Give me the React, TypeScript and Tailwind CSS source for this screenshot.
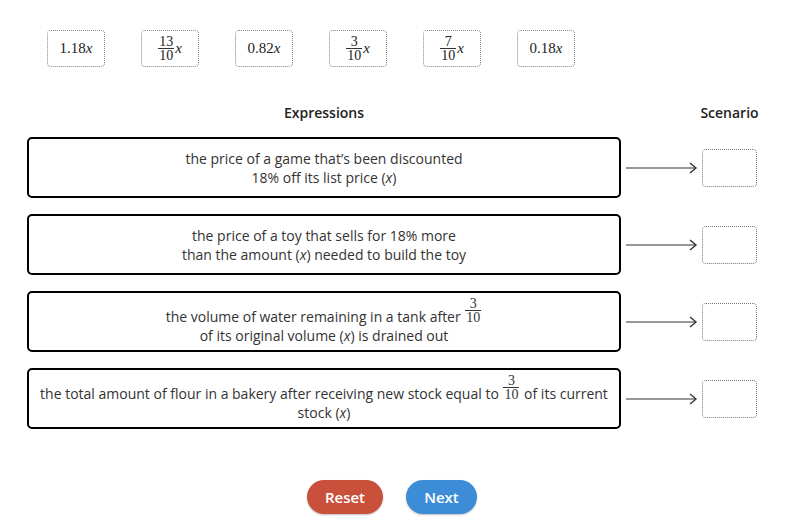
import React from "react";

function Frac({ n, d }: { n: string; d: string }) {
  return (
    <span
      className="inline-flex flex-col items-center text-[14px] leading-[13px] mr-[1px]"
      style={{ fontFamily: '"Liberation Serif", serif' }}
    >
      <span className="px-[1px]">{n}</span>
      <span className="self-stretch border-t border-[#333]" />
      <span className="px-[1px]">{d}</span>
    </span>
  );
}

function InlineFrac({ n, d }: { n: string; d: string }) {
  return (
    <span
      className="relative inline-block text-[14px] leading-[14px] mx-[1px] border-t border-[#333] px-[1px]"
      style={{ fontFamily: '"Liberation Serif", serif' }}
    >
      <span className="absolute left-0 right-0 bottom-full text-center leading-[14px]">{n}</span>
      {d}
    </span>
  );
}

function X() {
  return <span className="italic" style={{ fontFamily: '"Liberation Serif", serif' }}>x</span>;
}

function Tile({ children }: { children: React.ReactNode }) {
  return (
    <div className="w-[58px] h-[37px] border border-dotted border-[#888] rounded-[4px] flex items-center justify-center text-[15px] text-[#222]" style={{ fontFamily: '"Liberation Serif", serif' }}>
      {children}
    </div>
  );
}

function Row({ children }: { children: React.ReactNode }) {
  return (
    <div className="flex items-center">
      <div className="w-[594px] h-[61px] border-2 border-black rounded-[5px] flex items-center justify-center text-center text-[14px] leading-[19px] text-[#333] px-[4px]">
        <div>{children}</div>
      </div>
      <svg width="76" height="14" viewBox="0 0 76 14" className="ml-[4px]">
        <line x1="1" y1="7" x2="71" y2="7" stroke="#333" strokeWidth="1.2" />
        <polyline points="65,2 71,7 65,12" fill="none" stroke="#333" strokeWidth="1.4" />
      </svg>
      <div className="w-[55px] h-[38px] border border-dotted border-[#777] rounded-[4px] ml-[1px]" />
    </div>
  );
}

export default function App() {
  return (
    <div className="w-[805px] h-[521px] bg-white relative overflow-hidden" style={{ fontFamily: '"Open Sans", sans-serif' }}>
      <div className="flex gap-[36px] pl-[47px] pt-[30px]">
        <Tile><span>1.18</span><X /></Tile>
        <Tile><Frac n="13" d="10" /><X /></Tile>
        <Tile><span>0.82</span><X /></Tile>
        <Tile><Frac n="3" d="10" /><X /></Tile>
        <Tile><Frac n="7" d="10" /><X /></Tile>
        <Tile><span>0.18</span><X /></Tile>
      </div>
      <div className="flex mt-[36px] text-[14px] text-[#222] font-semibold leading-[20px]">
        <div className="w-[594px] ml-[27px] text-center">Expressions</div>
        <div className="w-[55px] ml-[81px] text-center whitespace-nowrap flex justify-center">Scenario</div>
      </div>
      <div className="flex flex-col gap-[16px] ml-[27px] mt-[14px]">
        <Row>
          the price of a game that’s been discounted
          <br />
          18% off its list price (<i>x</i>)
        </Row>
        <Row>
          the price of a toy that sells for 18% more
          <br />
          than the amount (<i>x</i>) needed to build the toy
        </Row>
        <Row>
          <div className="mt-[9px]">
            the volume of water remaining in a tank after <InlineFrac n="3" d="10" />
            <br />
            of its original volume (<i>x</i>) is drained out
          </div>
        </Row>
        <Row>
          <div className="mt-[9px]">
            the total amount of flour in a bakery after receiving new stock equal to <InlineFrac n="3" d="10" /> of its current
            <br />
            stock (<i>x</i>)
          </div>
        </Row>
      </div>
      <div className="flex gap-[23px] ml-[307px] mt-[51px]">
        <button className="w-[76px] h-[34px] rounded-full bg-[#c9513b] text-white font-semibold text-[15px] shadow-[0_1px_2px_rgba(0,0,0,0.25)]">Reset</button>
        <button className="w-[71px] h-[34px] rounded-full bg-[#3d8cd8] text-white font-semibold text-[15px] shadow-[0_1px_2px_rgba(0,0,0,0.25)]">Next</button>
      </div>
    </div>
  );
}
